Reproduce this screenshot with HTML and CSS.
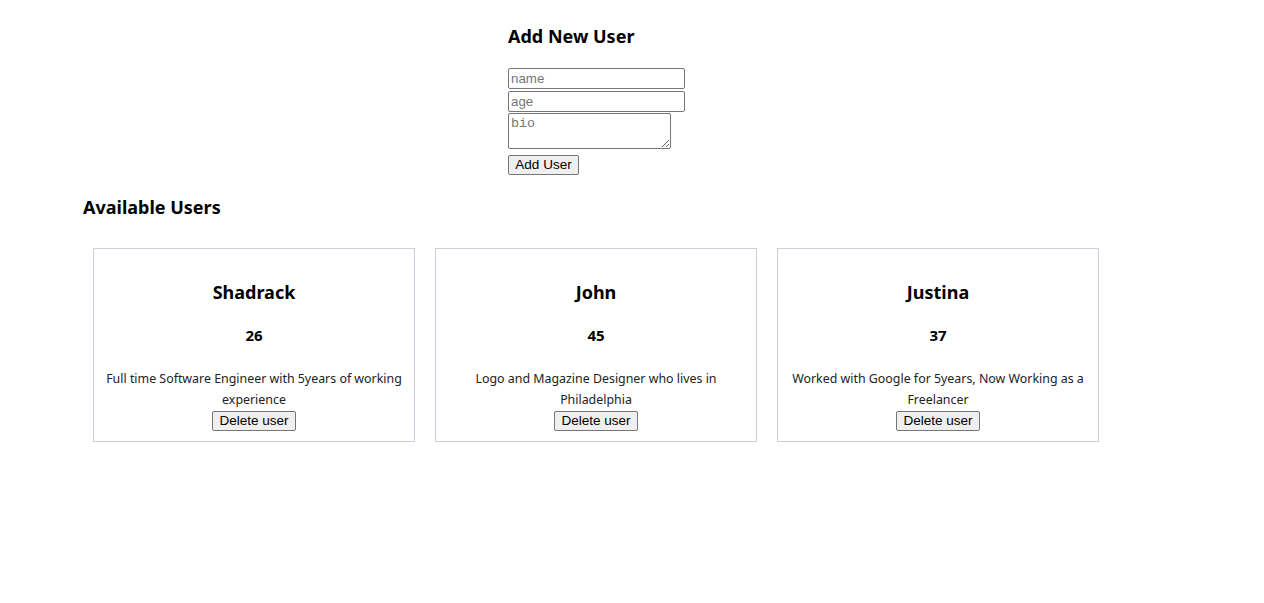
FILE: index.html
```html
<!DOCTYPE html>
<html>
<head>
<meta charset="utf-8">
<link rel="stylesheet" href="styles.css">
</head>
<body>
<div class="app">
  <section class="form-section">
    <h3 class="form-title">Add New User</h3>
    <form class="user-form">
      <input class="field" type="text" placeholder="name">
      <input class="field" type="text" placeholder="age">
      <textarea class="bio-field" placeholder="bio"></textarea>
      <button class="btn add-btn" type="button">Add User</button>
    </form>
  </section>
  <section class="users-section">
    <h3 class="users-title">Available Users</h3>
    <div class="cards">
      <div class="card">
        <h2 class="card-name">Shadrack</h2>
        <h4 class="card-age">26</h4>
        <p class="card-bio">Full time Software Engineer with 5years of working experience</p>
        <button class="btn" type="button">Delete user</button>
      </div>
      <div class="card">
        <h2 class="card-name">John</h2>
        <h4 class="card-age">45</h4>
        <p class="card-bio">Logo and Magazine Designer who lives in Philadelphia</p>
        <button class="btn" type="button">Delete user</button>
      </div>
      <div class="card">
        <h2 class="card-name">Justina</h2>
        <h4 class="card-age">37</h4>
        <p class="card-bio">Worked with Google for 5years, Now Working as a Freelancer</p>
        <button class="btn" type="button">Delete user</button>
      </div>
    </div>
  </section>
</div>
</body>
</html>
```
FILE: styles.css
```css
html, body {
  margin: 0;
  padding: 0;
  background: #fff;
}
body {
  font-family: "Noto Sans", "Open Sans", sans-serif;
  color: #000;
}
.form-section {
  width: 248px;
  margin: 0 auto;
  padding-top: 24px;
}
.form-title {
  font-size: 18px;
  font-weight: 700;
  margin: 0 0 20px 0;
  line-height: 24px;
}
.user-form {
  display: flex;
  flex-direction: column;
  align-items: flex-start;
}
.field {
  width: 177px;
  height: 21px;
  box-sizing: border-box;
  border: 1px solid #767676;
  border-radius: 2px;
  padding: 1px 2px;
  font-family: "Liberation Sans", Arial, sans-serif;
  font-size: 13.33px;
  margin: 0 0 2px 0;
}
.field::placeholder, .bio-field::placeholder {
  color: #757575;
}
.bio-field {
  width: 163px;
  height: 36px;
  box-sizing: border-box;
  border: 1px solid #767676;
  border-radius: 2px;
  padding: 2px;
  font-family: "Liberation Mono", monospace;
  font-size: 13.33px;
  margin: -1px 0 0 0;
}
.btn {
  font-family: "Liberation Sans", Arial, sans-serif;
  font-size: 13.5px;
  height: 20px;
  padding: 0 6px;
  border: 1px solid #767676;
  border-radius: 2px;
  background: #efefef;
  color: #000;
  line-height: 18px;
}
.add-btn {
  margin-top: 6px;
  width: 71px;
}
.users-section {
  padding: 0 0 0 83px;
  margin-top: 20px;
}
.users-title {
  font-size: 18px;
  font-weight: 700;
  margin: 0;
  line-height: 24px;
}
.cards {
  display: flex;
  gap: 20px;
  margin: 29px 0 0 10px;
}
.card {
  width: 322px;
  height: 194px;
  box-sizing: border-box;
  border: 1px solid #d0ccdc;
  display: flex;
  flex-direction: column;
  align-items: center;
  text-align: center;
  padding: 31px 6px 0 6px;
}
.card-name {
  font-size: 18px;
  font-weight: 700;
  margin: 0;
  line-height: 24px;
}
.card-age {
  font-size: 15px;
  font-weight: 700;
  margin: 21px 0 0 0;
  line-height: 20px;
}
.card-bio {
  font-size: 12.4px;
  line-height: 21px;
  margin: 23px 0 1px 0;
  color: #222;
}
```
